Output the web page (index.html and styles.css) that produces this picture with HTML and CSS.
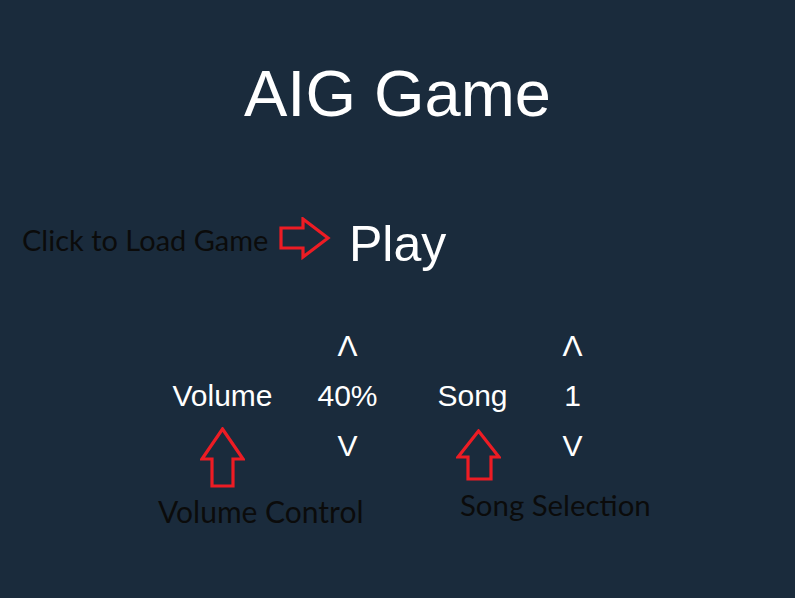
FILE: index.html
```html
<!DOCTYPE html>
<html lang="en">
<head>
<meta charset="utf-8">
<title>AIG Game</title>
<link rel="stylesheet" href="styles.css">
</head>
<body>
<main class="page">
  <h1 class="title">AIG Game</h1>

  <div class="play-row">
    <span class="note note-load">Click to Load Game</span>
    <svg class="arrow-right" width="52" height="43" viewBox="0 0 52 43" aria-hidden="true">
      <polygon points="2,11 24,11 24,2 49,21 24,40 24,31 2,31" />
    </svg>
    <span class="play">Play</span>
  </div>

  <div class="controls">
    <span class="cell"></span>
    <span class="cell">Λ</span>
    <span class="cell"></span>
    <span class="cell">Λ</span>

    <span class="cell">Volume</span>
    <span class="cell">40%</span>
    <span class="cell">Song</span>
    <span class="cell">1</span>

    <span class="cell cell-arrow">
      <svg class="arrow-up arrow-volume" width="45" height="61" viewBox="0 0 45 61" aria-hidden="true">
        <polygon points="22.5,2 43,32 33,32 33,59 12,59 12,32 2,32" />
      </svg>
    </span>
    <span class="cell">V</span>
    <span class="cell cell-arrow">
      <svg class="arrow-up arrow-song" width="45" height="52" viewBox="0 0 45 52" aria-hidden="true">
        <polygon points="22.5,2 43,28 35,28 35,50 12,50 12,28 2,28" />
      </svg>
    </span>
    <span class="cell">V</span>
  </div>

  <div class="notes-row">
    <span class="note note-volume">Volume Control</span>
    <span class="note note-song">Song Selection</span>
  </div>
</main>
</body>
</html>
```

FILE: styles.css
```css
html, body {
  margin: 0;
  padding: 0;
}

body {
  background: #1a2b3c;
  color: #ffffff;
  font-family: "Liberation Sans", Arial, sans-serif;
  width: 795px;
  height: 598px;
  overflow: hidden;
}

.page {
  display: flex;
  flex-direction: column;
}

.title {
  margin: 62px 0 0;
  font-size: 65px;
  font-weight: normal;
  line-height: 64px;
  text-align: center;
}

.play-row {
  display: flex;
  align-items: flex-start;
  margin-top: 95px;
  padding-left: 22px;
  height: 48px;
}

.note {
  font-family: "Lato", "Open Sans", sans-serif;
  color: #0b0b0b;
  font-size: 30px;
  line-height: 34px;
  white-space: nowrap;
}

.note-load {
  font-size: 29px;
  width: 257px;
  margin-top: 2px;
}

.arrow-right {
  margin-top: -4px;
  flex: none;
}

.arrow-right polygon,
.arrow-up polygon {
  fill: none;
  stroke: #ed1c24;
  stroke-width: 3.2;
  stroke-linejoin: miter;
}

.play {
  margin-left: 18px;
  margin-top: -1px;
  font-size: 50px;
  line-height: 48px;
}

.controls {
  display: grid;
  grid-template-columns: 125px 125px 125px 75px;
  grid-auto-rows: 50px;
  margin: 52px 0 0 160px;
  font-size: 30px;
  line-height: 50px;
  text-align: center;
}

.cell {
  display: block;
}

.cell-arrow {
  position: relative;
}

.arrow-up {
  display: block;
  margin: 6px auto 0;
}

.arrow-song {
  margin-top: 8px;
  position: relative;
  left: 6px;
}

.notes-row {
  display: flex;
  align-items: flex-start;
  margin-top: 23px;
  padding-left: 158px;
}

.note-volume {
  width: 302px;
  flex: none;
}

.note-song {
  font-size: 29.4px;
  margin-top: -6px;
}
```
